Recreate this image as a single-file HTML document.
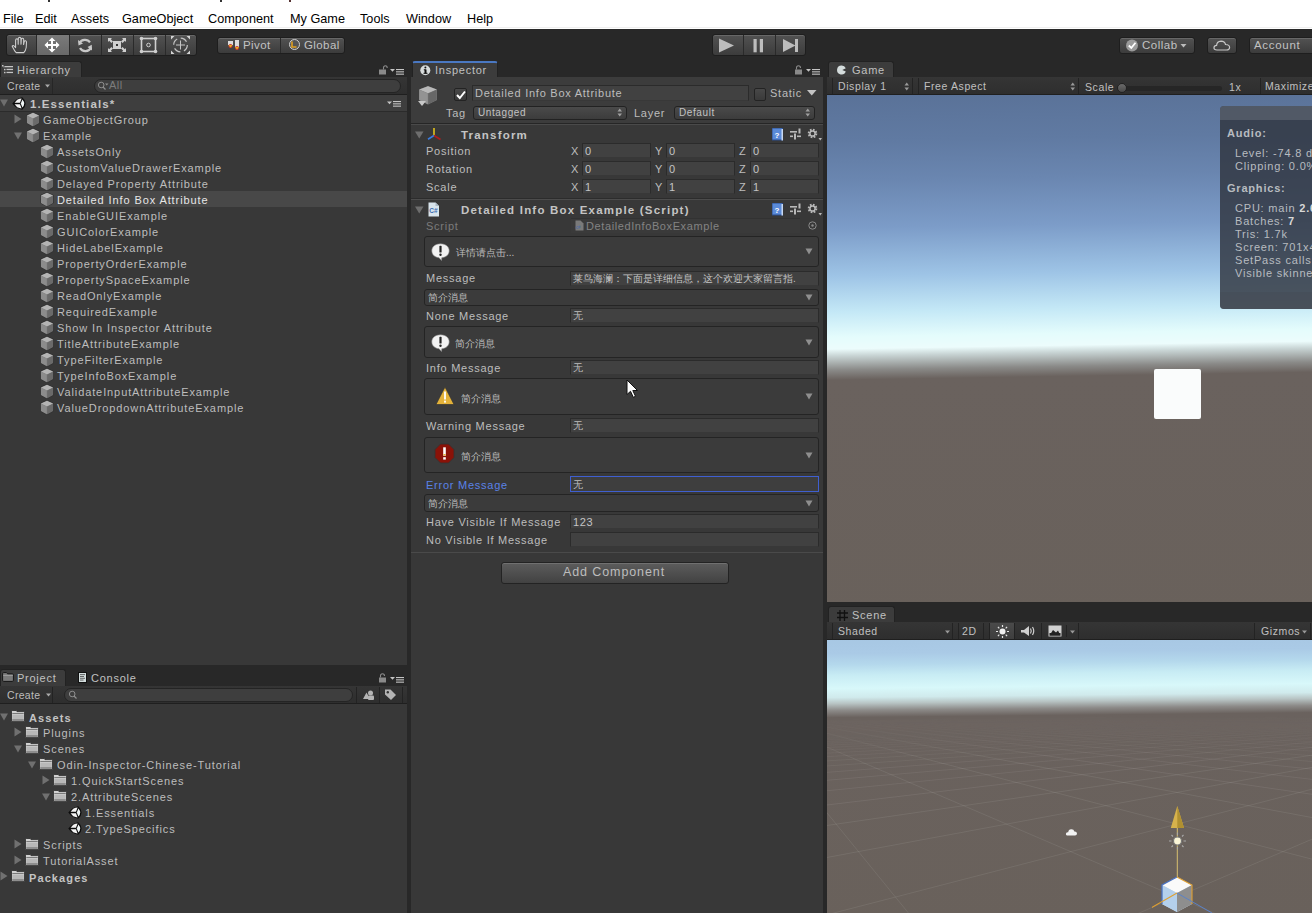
<!DOCTYPE html>
<html><head><meta charset="utf-8">
<style>
*{box-sizing:border-box;margin:0;padding:0}
body{-webkit-font-smoothing:antialiased}
html,body{width:1312px;height:913px;overflow:hidden;background:#282828;font-family:"Liberation Sans",sans-serif;font-size:11px;color:#b4b4b4}
.a{position:absolute}
.t{position:absolute;white-space:nowrap;line-height:13px}
#menu{left:0;top:0;width:1312px;height:29px;background:#fff}
#menu .t{color:#000;font-size:12.7px;top:13px}
.btn{position:absolute;border:1px solid #1e1e1e;border-radius:3px;background:linear-gradient(#525252,#3c3c3c);box-shadow:inset 0 1px 0 rgba(255,255,255,0.13)}
.tab{position:absolute;background:#3c3c3c;border-radius:3px 3px 0 0;border:1px solid #222;border-bottom:none}
.tbar{position:absolute;background:linear-gradient(#353535,#2e2e2e);border-bottom:1px solid #1f1f1f}
.panel{position:absolute;background:#383838}
.tl{font-size:11px;letter-spacing:0.75px;color:#c0c0c0}
.hr{font-size:11px;letter-spacing:0.9px;color:#bdbdbd}
.hb{font-size:11px;letter-spacing:1.1px;font-weight:bold;color:#c4c4c4;margin-top:1px}
.il{font-size:11px;letter-spacing:0.75px;color:#bdbdbd;margin-top:1px}
.ib{font-size:11.5px;letter-spacing:1.2px;font-weight:bold;color:#c4c4c4;margin-top:1px}
.fv{font-size:11px;letter-spacing:0.6px;color:#c4c4c4;margin-top:1px}
.cj{font-size:10px;color:#bdbdbd;margin-top:1px}
.fld{background:#414141;border:1px solid #2b2b2b;border-bottom-color:#383838}
.cb{background:linear-gradient(#484848,#3a3a3a);border:1px solid #232323;border-radius:2px}
.dd{background:linear-gradient(#4a4a4a,#3c3c3c);border:1px solid #222;border-radius:3px}
.box{background:#3b3b3b;border:1px solid #242424;border-radius:3px}
.sep{position:absolute;width:1px;height:16px;background:#232323}
.tt{font-size:10.5px;letter-spacing:0.6px;color:#c0c0c0}
.st{white-space:nowrap;font-size:11px;letter-spacing:0.8px;color:#b8bcc0;line-height:13px;margin-top:-1px}
.st b{color:#d8d8d8}
</style></head><body>
<svg width="0" height="0" style="position:absolute"><defs>
<symbol id="cube" viewBox="0 0 13 14"><path d="M6.5 0.5 L12.5 3.2 L12.5 10.3 L6.5 13.5 L0.5 10.3 L0.5 3.2 Z" fill="#7a7a7a" stroke="#2a2a2a" stroke-width="0.8"/><path d="M6.5 0.8 L12.2 3.3 L6.5 6 L0.8 3.3Z" fill="#b4b4b4"/><path d="M0.8 3.5 L6.3 6.1 L6.3 13.2 L0.8 10.2Z" fill="#8c8c8c"/><path d="M6.7 6.1 L12.2 3.5 L12.2 10.2 L6.7 13.2Z" fill="#6a6a6a"/></symbol>
<symbol id="unity" viewBox="0 0 14 13"><path d="M0.3 6.5 Q3.5 1.8 10.2 0.2 Q13.6 3.2 13.6 6.5 Q13.6 9.8 10.2 12.8 Q3.5 11.2 0.3 6.5Z" fill="#0c0c0c"/><path d="M2.6 5.7 L5.2 2.7 Q7.6 1.7 9.6 1.6 L8 5.7Z" fill="#f4f4f4"/><path d="M2.6 7.3 L5.2 10.3 Q7.6 11.3 9.6 11.4 L8 7.3Z" fill="#f4f4f4"/><path d="M8.8 6.5 L10.4 2.4 Q12.2 4.4 12.2 6.5 Q12.2 8.6 10.4 10.6Z" fill="#f0f6f6"/></symbol>
<symbol id="folder" viewBox="0 0 14 12"><path d="M0.5 1.2 Q0.5 0.5 1.2 0.5 H5 L6 1.6 H12.8 Q13.5 1.6 13.5 2.3 V11 Q13.5 11.5 13 11.5 H1 Q0.5 11.5 0.5 11Z" fill="#d0d0d0" stroke="#2a2a2a" stroke-width="0.8"/><rect x="1.3" y="3" width="11.4" height="1" fill="#7a7a7a"/><rect x="1.3" y="4.6" width="11.4" height="6.5" fill="#b8b8b8"/><rect x="1.3" y="9" width="11.4" height="2" fill="#8e8e8e"/></symbol>
<symbol id="hdricons" viewBox="0 0 52 15"><rect x="1" y="1" width="11" height="12.5" fill="#2a4d8c"/><rect x="1.5" y="1.5" width="9.5" height="11" fill="#5a8ad8"/><rect x="10.5" y="2" width="1.5" height="11.5" fill="#c8d8f0"/><text x="3.5" y="10.5" font-family="Liberation Sans" font-size="8" font-weight="bold" fill="#fff">?</text><g fill="#b8b8b8"><rect x="19" y="4" width="7" height="1.6"/><rect x="27.5" y="1.5" width="2" height="5"/><rect x="19" y="8.5" width="3" height="1.6"/><rect x="23" y="6.5" width="2" height="6"/><rect x="26" y="8.5" width="4" height="1.6"/></g><circle cx="41.5" cy="6.5" r="3.7" fill="none" stroke="#b8b8b8" stroke-width="2.2" stroke-dasharray="1.6 1.3"/><circle cx="41.5" cy="6.5" r="2.6" fill="none" stroke="#b8b8b8" stroke-width="1.5"/><path d="M47.5 11 h3.5 l-1.75 2.5z" fill="#b8b8b8"/></symbol>
<symbol id="bubble" viewBox="0 0 19 18"><path d="M9.5 0.8 C14.8 0.8 18.2 3.8 18.2 7.8 C18.2 11.6 15 14.5 10.8 14.7 L10.5 17.5 L8 14.7 C3.8 14.4 0.8 11.6 0.8 7.8 C0.8 3.8 4.2 0.8 9.5 0.8Z" fill="#f2f2f2" stroke="#888" stroke-width="0.6"/><rect x="8.4" y="2.8" width="2.2" height="6.8" rx="0.6" fill="#222"/><circle cx="9.5" cy="11.8" r="1.2" fill="#222"/></symbol>
<symbol id="warn" viewBox="0 0 20 20"><path d="M10 1 L19 18.5 H1Z" fill="#e4b23a" stroke="#333" stroke-width="0.7" stroke-linejoin="round"/><rect x="9.1" y="5.5" width="1.8" height="8" fill="#fff"/><rect x="9.1" y="14.6" width="1.8" height="2" fill="#fff"/></symbol>
<symbol id="err" viewBox="0 0 21 21"><path d="M6.5 1 H14.5 L20 6.5 V14.5 L14.5 20 H6.5 L1 14.5 V6.5Z" fill="#8a1208" stroke="#333" stroke-width="0.8"/><rect x="9.2" y="4.3" width="2.6" height="8.5" fill="#fff"/><rect x="9.2" y="14.2" width="2.6" height="2.4" fill="#fff"/><rect x="9.4" y="11" width="2.2" height="1.5" fill="#e8b030"/></symbol>
</defs></svg>
<div id="menu" class="a">
 <div class="a" style="left:0;top:27px;width:1312px;height:1px;background:#efefef"></div>
 <div class="a" style="left:48px;top:0;width:2px;height:2px;background:#333"></div><div class="a" style="left:220px;top:0;width:2px;height:2px;background:#333"></div><div class="a" style="left:289px;top:0;width:2px;height:2px;background:#533"></div>
 <span class="t" style="left:3px">File</span>
 <span class="t" style="left:35px">Edit</span>
 <span class="t" style="left:71px">Assets</span>
 <span class="t" style="left:122px">GameObject</span>
 <span class="t" style="left:208px">Component</span>
 <span class="t" style="left:290px">My Game</span>
 <span class="t" style="left:360px">Tools</span>
 <span class="t" style="left:406px">Window</span>
 <span class="t" style="left:467px">Help</span>
</div>

<!-- main toolbar -->
<div class="btn" style="left:6px;top:34px;width:191px;height:22px;overflow:hidden">
 <div class="a" style="left:30px;top:0;width:32px;height:21px;background:linear-gradient(#7a7a7a,#686868)"></div>
 <div class="a" style="left:29px;top:0;width:1px;height:21px;background:#2a2a2a"></div>
 <div class="a" style="left:62px;top:0;width:1px;height:21px;background:#2a2a2a"></div>
 <div class="a" style="left:94px;top:0;width:1px;height:21px;background:#2a2a2a"></div>
 <div class="a" style="left:126px;top:0;width:1px;height:21px;background:#2a2a2a"></div>
 <div class="a" style="left:158px;top:0;width:1px;height:21px;background:#2a2a2a"></div>
</div>
<svg class="a" style="left:0;top:30px" width="200" height="30" viewBox="0 0 200 30">
 <!-- hand -->
 <path d="M16.2 22.6 Q14.8 21.2 13.8 19.2 L12.3 16.6 Q12 15.4 13.2 15.5 Q14.2 15.8 15.6 17.6 L15.6 10.2 Q15.7 8.7 16.9 8.7 Q18 8.8 18.1 10.2 L18.2 14.2 L18.3 8.6 Q18.5 7.3 19.6 7.3 Q20.8 7.4 20.9 8.7 L21 14.2 L21.3 9.3 Q21.5 8.2 22.6 8.3 Q23.7 8.5 23.7 9.6 L23.6 14.6 L24.2 11.6 Q24.5 10.6 25.5 10.8 Q26.6 11.1 26.5 12.2 L26.2 17.5 Q25.6 21 23.8 22.6 Z" fill="none" stroke="#d0d0d0" stroke-width="1.05" stroke-linejoin="round"/>
 <!-- move -->
 <g fill="#fff"><path d="M52 7.5 L55.5 11 L53 11 L53 14 L56 14 L56 11.5 L59.5 15 L56 18.5 L56 16 L53 16 L53 19 L55.5 19 L52 22.5 L48.5 19 L51 19 L51 16 L48 16 L48 18.5 L44.5 15 L48 11.5 L48 14 L51 14 L51 11 L48.5 11 Z"/></g>
 <!-- rotate -->
 <path d="M79.5 13 A6 5.5 0 0 1 90 12.3" fill="none" stroke="#c8c8c8" stroke-width="2.2"/>
 <path d="M78 10 L78.5 15.5 L83 13.5 Z" fill="#c8c8c8"/>
 <path d="M91 17.5 A6 5.5 0 0 1 80 18" fill="none" stroke="#c8c8c8" stroke-width="2.2"/>
 <path d="M92 20.5 L91.8 14.8 L87.5 17 Z" fill="#c8c8c8"/>
 <!-- scale -->
 <g fill="#cfcfcf"><rect x="113" y="11" width="8" height="8"/><path d="M108 8 L112 8 L110.8 9.2 L113 11.4 L111.4 13 L109.2 10.8 L108 12 Z M126 8 L122 8 L123.2 9.2 L121 11.4 L122.6 13 L124.8 10.8 L126 12 Z M108 22 L112 22 L110.8 20.8 L113 18.6 L111.4 17 L109.2 19.2 L108 18 Z M126 22 L122 22 L123.2 20.8 L121 18.6 L122.6 17 L124.8 19.2 L126 18 Z"/></g>
 <rect x="116" y="14" width="2" height="2" fill="#333"/>
 <!-- rect -->
 <rect x="141.5" y="8.5" width="14" height="13" fill="none" stroke="#cfcfcf" stroke-width="1.6"/>
 <g fill="#cfcfcf"><circle cx="141.5" cy="8.5" r="1.8"/><circle cx="155.5" cy="8.5" r="1.8"/><circle cx="141.5" cy="21.5" r="1.8"/><circle cx="155.5" cy="21.5" r="1.8"/></g>
 <circle cx="148.5" cy="15" r="1.8" fill="none" stroke="#cfcfcf" stroke-width="1"/>
 <!-- transform -->
 <circle cx="180.5" cy="15" r="6.8" fill="none" stroke="#c4c4c4" stroke-width="1.2" stroke-dasharray="7 3.7"/>
 <g fill="#d4d4d4"><path d="M171 6 L174.5 6 L171 9.5Z M190 6 L186.5 6 L190 9.5Z M171 24 L174.5 24 L171 20.5Z M190 24 L186.5 24 L190 20.5Z"/></g>
 <path d="M180.5 10.5 V19.5 M176 15 H185" stroke="#c4c4c4" stroke-width="1"/>
</svg>

<div class="btn" style="left:217px;top:37px;width:128px;height:17px">
 <div class="a" style="left:62px;top:0;width:1px;height:15px;background:#2a2a2a"></div>
</div>
<svg class="a" style="left:225px;top:39px" width="80" height="14">
 <rect x="3" y="2" width="5" height="4" fill="#ddd"/><rect x="10" y="1" width="4" height="7" fill="#ddd"/>
 <circle cx="5.5" cy="7" r="2" fill="#c33"/><circle cx="12" cy="9" r="2" fill="#c33"/>
 <path d="M3.5 6 h4 l-2 2.5z M10 8 h4 l-2 2.5z" fill="#e8b020"/>
 <circle cx="69.5" cy="5.5" r="5" fill="#555" stroke="#cfcfcf" stroke-width="1"/>
 <path d="M67 2.5 V8 H71.5" fill="none" stroke="#e0a020" stroke-width="1.6"/>
</svg>
<span class="t" style="left:243px;top:39px;color:#c2c2c2;font-size:11.5px;letter-spacing:0.4px">Pivot</span>
<span class="t" style="left:304px;top:39px;color:#c2c2c2;font-size:11.5px;letter-spacing:0.4px">Global</span>

<div class="btn" style="left:712px;top:34px;width:94px;height:22px">
 <div class="a" style="left:30px;top:0;width:1px;height:20px;background:#2a2a2a"></div>
 <div class="a" style="left:62px;top:0;width:1px;height:20px;background:#2a2a2a"></div>
</div>
<svg class="a" style="left:712px;top:34px" width="94" height="22">
 <path d="M7 4.5 L22 11.5 L7 18.5 Z" fill="#bdbdbd"/>
 <rect x="41.5" y="5" width="3.2" height="13.3" fill="#bdbdbd"/><rect x="47.8" y="5" width="3.2" height="13.3" fill="#bdbdbd"/>
 <path d="M71 5 L83.5 11.5 L71 18 Z" fill="#bdbdbd"/><rect x="83" y="5" width="3" height="13" fill="#bdbdbd"/>
</svg>

<div class="btn" style="left:1119px;top:37px;width:76px;height:17px"></div>
<svg class="a" style="left:1125px;top:39px" width="14" height="14"><circle cx="7" cy="6.5" r="6" fill="#9a9a9a"/><path d="M3.8 6.5 L6.3 9 L10.5 3.8" fill="none" stroke="#fff" stroke-width="1.8"/></svg>
<span class="t" style="left:1142px;top:39px;color:#c2c2c2;font-size:11.5px;letter-spacing:0.5px">Collab</span>
<svg class="a" style="left:1180px;top:43px" width="8" height="6"><path d="M0.5 1 h6 l-3 3.5z" fill="#bbb"/></svg>
<div class="btn" style="left:1207px;top:37px;width:30px;height:17px"></div>
<svg class="a" style="left:1213px;top:39px" width="18" height="13"><path d="M4 11 Q0.8 11 1 8.5 Q1.2 6.3 3.6 6.3 Q4 2.5 8 2.2 Q11.8 2.3 12.5 5.5 Q16.5 5.5 16.6 8.5 Q16.5 11 13.5 11 Z" fill="none" stroke="#c8c8c8" stroke-width="1.2"/></svg>
<div class="btn" style="left:1249px;top:37px;width:70px;height:17px"></div>
<span class="t" style="left:1254px;top:39px;color:#c2c2c2;font-size:11.5px;letter-spacing:0.7px">Account</span>

<!-- Hierarchy -->
<div class="tab" style="left:0;top:61px;width:82px;height:17px"></div>
<svg class="a" style="left:2px;top:65px" width="12" height="9"><g fill="#c4c4c4"><rect x="0" y="0" width="1.5" height="1.5"/><rect x="1" y="1" width="1.5" height="1.5" fill="#777"/><rect x="2.5" y="1" width="8.5" height="1.3"/><rect x="2" y="3.8" width="1.5" height="1.5"/><rect x="4.5" y="3.8" width="6.5" height="1.3"/><rect x="2" y="6.8" width="1.5" height="1.5"/><rect x="4.5" y="6.8" width="6.5" height="1.3"/></g></svg>
<span class="t tl" style="left:17px;top:64px">Hierarchy</span>
<svg class="a" style="left:378px;top:65px" width="28" height="11"><path d="M5.5 4.5 V3 Q5.5 0.8 7.5 0.8 Q9.2 0.8 9.2 3" fill="none" stroke="#8a8a8a" stroke-width="1.1"/><rect x="1" y="4.5" width="7" height="5" fill="#8a8a8a"/><path d="M12 4 h5 l-2.5 2.8z" fill="#c4c4c4"/><rect x="18" y="4" width="8" height="1.1" fill="#c4c4c4"/><rect x="18" y="6.3" width="8" height="1.1" fill="#c4c4c4"/><rect x="18" y="8.6" width="8" height="1.1" fill="#c4c4c4"/></svg>
<div class="tbar" style="left:0;top:77px;width:407px;height:18px"></div>
<div class="a" style="left:52px;top:78px;width:1px;height:16px;background:#262626"></div>
<span class="t" style="left:7px;top:80px;font-size:10.5px;letter-spacing:0.3px;color:#bdbdbd">Create</span>
<svg class="a" style="left:45px;top:84px" width="6" height="4"><path d="M0 0.5 h5 l-2.5 3z" fill="#aaa"/></svg>
<div class="a" style="left:94px;top:79px;width:307px;height:14px;border-radius:7px;background:#3e3e3e;border:1px solid #242424"></div>
<svg class="a" style="left:97px;top:81px" width="12" height="10"><circle cx="4.2" cy="4" r="2.8" fill="none" stroke="#8f8f8f" stroke-width="1"/><path d="M6 6 L8.5 8.5" stroke="#8f8f8f" stroke-width="1.2"/><path d="M8 2.5 h3.5 l-1.75 2z" fill="#8f8f8f"/></svg>
<span class="t" style="left:109px;top:79px;font-size:11px;color:#7c7c7c;letter-spacing:0.5px">All</span>
<div class="panel" style="left:0;top:95px;width:407px;height:570px"></div>
<div class="a" style="left:0;top:95px;width:407px;height:17px;background:#3e3e3e;border-bottom:1px solid #2b2b2b"></div>
<svg class="a" style="left:0;top:99px" width="9" height="8"><path d="M0 0.5 h8 l-4 7z" fill="#6e6e6e"/></svg>
<svg class="a" style="left:12px;top:97px" width="14" height="13"><use href="#unity"/></svg>
<span class="t hb" style="left:30px;top:97px;font-size:11.5px;letter-spacing:1.1px">1.Essentials*</span>
<svg class="a" style="left:387px;top:100px" width="16" height="8"><path d="M0 1.5 h5 l-2.5 2.8z" fill="#c4c4c4"/><rect x="6" y="1" width="8" height="1.1" fill="#c4c4c4"/><rect x="6" y="3.3" width="8" height="1.1" fill="#c4c4c4"/><rect x="6" y="5.6" width="8" height="1.1" fill="#c4c4c4"/></svg>
<div class="a" style="left:0;top:191px;width:407px;height:16px;background:#484848"></div>
<svg class="a" style="left:14px;top:114px" width="9" height="10"><path d="M0.5 0.5 v9 l7 -4.5z" fill="#707070"/></svg>
<svg class="a" style="left:14px;top:132px" width="9" height="9"><path d="M0 0.5 h8 l-4 7z" fill="#707070"/></svg>
<svg class="a" style="left:26px;top:112px" width="14" height="15"><use href="#cube"/></svg>
<span class="t hr" style="left:43px;top:114px">GameObjectGroup</span>
<svg class="a" style="left:26px;top:128px" width="14" height="15"><use href="#cube"/></svg>
<span class="t hr" style="left:43px;top:130px">Example</span>
<svg class="a" style="left:40px;top:144px" width="14" height="15"><use href="#cube"/></svg><span class="t hr" style="left:57px;top:146px">AssetsOnly</span>
<svg class="a" style="left:40px;top:160px" width="14" height="15"><use href="#cube"/></svg><span class="t hr" style="left:57px;top:162px">CustomValueDrawerExample</span>
<svg class="a" style="left:40px;top:176px" width="14" height="15"><use href="#cube"/></svg><span class="t hr" style="left:57px;top:178px">Delayed Property Attribute</span>
<svg class="a" style="left:40px;top:192px" width="14" height="15"><use href="#cube"/></svg><span class="t hr" style="left:57px;top:194px;color:#e6e6e6">Detailed Info Box Attribute</span>
<svg class="a" style="left:40px;top:208px" width="14" height="15"><use href="#cube"/></svg><span class="t hr" style="left:57px;top:210px">EnableGUIExample</span>
<svg class="a" style="left:40px;top:224px" width="14" height="15"><use href="#cube"/></svg><span class="t hr" style="left:57px;top:226px">GUIColorExample</span>
<svg class="a" style="left:40px;top:240px" width="14" height="15"><use href="#cube"/></svg><span class="t hr" style="left:57px;top:242px">HideLabelExample</span>
<svg class="a" style="left:40px;top:256px" width="14" height="15"><use href="#cube"/></svg><span class="t hr" style="left:57px;top:258px">PropertyOrderExample</span>
<svg class="a" style="left:40px;top:272px" width="14" height="15"><use href="#cube"/></svg><span class="t hr" style="left:57px;top:274px">PropertySpaceExample</span>
<svg class="a" style="left:40px;top:288px" width="14" height="15"><use href="#cube"/></svg><span class="t hr" style="left:57px;top:290px">ReadOnlyExample</span>
<svg class="a" style="left:40px;top:304px" width="14" height="15"><use href="#cube"/></svg><span class="t hr" style="left:57px;top:306px">RequiredExample</span>
<svg class="a" style="left:40px;top:320px" width="14" height="15"><use href="#cube"/></svg><span class="t hr" style="left:57px;top:322px">Show In Inspector Attribute</span>
<svg class="a" style="left:40px;top:336px" width="14" height="15"><use href="#cube"/></svg><span class="t hr" style="left:57px;top:338px">TitleAttributeExample</span>
<svg class="a" style="left:40px;top:352px" width="14" height="15"><use href="#cube"/></svg><span class="t hr" style="left:57px;top:354px">TypeFilterExample</span>
<svg class="a" style="left:40px;top:368px" width="14" height="15"><use href="#cube"/></svg><span class="t hr" style="left:57px;top:370px">TypeInfoBoxExample</span>
<svg class="a" style="left:40px;top:384px" width="14" height="15"><use href="#cube"/></svg><span class="t hr" style="left:57px;top:386px">ValidateInputAttributeExample</span>
<svg class="a" style="left:40px;top:400px" width="14" height="15"><use href="#cube"/></svg><span class="t hr" style="left:57px;top:402px">ValueDropdownAttributeExample</span>
<!-- Inspector -->
<div class="tab" style="left:412px;top:61px;width:86px;height:17px;border-top:2px solid #4a78c2"></div>
<svg class="a" style="left:420px;top:65px" width="11" height="11"><circle cx="5.3" cy="5.3" r="5" fill="#d8dcdc"/><rect x="4.5" y="4.5" width="2" height="4" fill="#111"/><rect x="3.5" y="7.8" width="4" height="1" fill="#111"/><rect x="3.8" y="4.3" width="2" height="1" fill="#111"/><circle cx="5.4" cy="2.6" r="1" fill="#111"/></svg>
<span class="t tl" style="left:435px;top:64px">Inspector</span>
<svg class="a" style="left:793px;top:65px" width="28" height="11"><path d="M3.5 4.5 V3 Q3.5 0.8 5.5 0.8 Q7.5 0.8 7.5 3" fill="none" stroke="#8a8a8a" stroke-width="1.1"/><rect x="2" y="4.5" width="7" height="5" fill="#8a8a8a"/><path d="M13 4 h5 l-2.5 2.8z" fill="#c4c4c4"/><rect x="19" y="4" width="8" height="1.1" fill="#c4c4c4"/><rect x="19" y="6.3" width="8" height="1.1" fill="#c4c4c4"/><rect x="19" y="8.6" width="8" height="1.1" fill="#c4c4c4"/></svg>
<div class="panel" style="left:411px;top:77px;width:412px;height:836px"></div>
<div class="a" style="left:411px;top:77px;width:412px;height:47px;background:#3c3c3c;border-bottom:1px solid #262626"></div>
<div class="a" style="left:411px;top:124px;width:412px;height:1px;background:#4a4a4a"></div>
<svg class="a" style="left:417px;top:85px" width="23" height="24"><path d="M11 1 L20 4.5 L20 15 L11 19.5 L2 15 L2 4.5Z" fill="#7c7c7c"/><path d="M11 1.2 L19.7 4.6 L11 8.3 L2.3 4.6Z" fill="#b9b9b9"/><path d="M2.3 4.8 L10.8 8.4 L10.8 19.2 L2.3 14.9Z" fill="#939393"/><path d="M11.2 8.4 L19.7 4.8 L19.7 14.9 L11.2 19.2Z" fill="#676767"/><path d="M1 16 h8 l-4 5z" fill="#c8c8c8"/></svg>
<div class="a cb" style="left:454px;top:88px;width:13px;height:13px"></div>
<svg class="a" style="left:455px;top:89px" width="12" height="12"><path d="M2 6 L4.8 9 L10 2.5" fill="none" stroke="#fff" stroke-width="2"/></svg>
<div class="a fld" style="left:472px;top:85px;width:277px;height:16px"></div>
<span class="t il" style="left:475px;top:86px">Detailed Info Box Attribute</span>
<div class="a cb" style="left:754px;top:88px;width:12px;height:13px"></div>
<span class="t il" style="left:770px;top:86px">Static</span>
<svg class="a" style="left:807px;top:90px" width="10" height="6"><path d="M0 0 h9.5 l-4.75 5.5z" fill="#c4c4c4"/></svg>
<span class="t il" style="left:446px;top:106px">Tag</span>
<div class="a dd" style="left:473px;top:106px;width:154px;height:14px"></div>
<span class="t" style="left:478px;top:106px;font-size:10px;letter-spacing:0.6px;color:#c2c2c2">Untagged</span>
<svg class="a" style="left:617px;top:108px" width="6" height="9"><path d="M0.5 3.5 L2.75 0.5 L5 3.5Z M0.5 5.5 L2.75 8.5 L5 5.5Z" fill="#a0a0a0"/></svg>
<span class="t il" style="left:634px;top:106px">Layer</span>
<div class="a dd" style="left:674px;top:106px;width:141px;height:14px"></div>
<span class="t" style="left:679px;top:106px;font-size:10px;letter-spacing:0.6px;color:#c2c2c2">Default</span>
<svg class="a" style="left:805px;top:108px" width="6" height="9"><path d="M0.5 3.5 L2.75 0.5 L5 3.5Z M0.5 5.5 L2.75 8.5 L5 5.5Z" fill="#a0a0a0"/></svg>

<!-- Transform -->
<svg class="a" style="left:415px;top:131px" width="9" height="8"><path d="M0 0.5 h8.5 l-4.25 7z" fill="#6e6e6e"/></svg>
<svg class="a" style="left:426px;top:127px" width="16" height="14"><path d="M8 1 V8.5" stroke="#e2c21c" stroke-width="1.6"/><path d="M8 8.5 L2 12.3" stroke="#3a7ce0" stroke-width="1.6"/><path d="M8 8.5 L14.5 12.5" stroke="#b01c1c" stroke-width="1.7"/></svg>
<span class="t ib" style="left:461px;top:128px">Transform</span>
<svg class="a" style="left:771px;top:127px" width="52" height="15"><use href="#hdricons"/></svg>
<span class="t il" style="left:426px;top:144px">Position</span>
<span class="t il" style="left:571px;top:144px">X</span><div class="a fld" style="left:582px;top:143px;width:69px;height:15px"></div><span class="t fv" style="left:585px;top:144px">0</span>
<span class="t il" style="left:655px;top:144px">Y</span><div class="a fld" style="left:666px;top:143px;width:69px;height:15px"></div><span class="t fv" style="left:669px;top:144px">0</span>
<span class="t il" style="left:739px;top:144px">Z</span><div class="a fld" style="left:750px;top:143px;width:69px;height:15px"></div><span class="t fv" style="left:753px;top:144px">0</span>
<span class="t il" style="left:426px;top:162px">Rotation</span>
<span class="t il" style="left:571px;top:162px">X</span><div class="a fld" style="left:582px;top:161px;width:69px;height:15px"></div><span class="t fv" style="left:585px;top:162px">0</span>
<span class="t il" style="left:655px;top:162px">Y</span><div class="a fld" style="left:666px;top:161px;width:69px;height:15px"></div><span class="t fv" style="left:669px;top:162px">0</span>
<span class="t il" style="left:739px;top:162px">Z</span><div class="a fld" style="left:750px;top:161px;width:69px;height:15px"></div><span class="t fv" style="left:753px;top:162px">0</span>
<span class="t il" style="left:426px;top:180px">Scale</span>
<span class="t il" style="left:571px;top:180px">X</span><div class="a fld" style="left:582px;top:179px;width:69px;height:15px"></div><span class="t fv" style="left:585px;top:180px">1</span>
<span class="t il" style="left:655px;top:180px">Y</span><div class="a fld" style="left:666px;top:179px;width:69px;height:15px"></div><span class="t fv" style="left:669px;top:180px">1</span>
<span class="t il" style="left:739px;top:180px">Z</span><div class="a fld" style="left:750px;top:179px;width:69px;height:15px"></div><span class="t fv" style="left:753px;top:180px">1</span>
<div class="a" style="left:411px;top:199px;width:412px;height:1px;background:#4c4c4c"></div>
<div class="a" style="left:411px;top:198px;width:412px;height:1px;background:#2c2c2c"></div>
<svg class="a" style="left:415px;top:206px" width="9" height="8"><path d="M0 0.5 h8.5 l-4.25 7z" fill="#6e6e6e"/></svg>
<svg class="a" style="left:428px;top:202px" width="12" height="15"><path d="M0.5 0.5 H7.5 L11 4 V14.5 H0.5Z" fill="#d8e4ec"/><path d="M7.5 0.5 V4 H11" fill="#aab8c4"/><text x="1.2" y="11.3" font-family="Liberation Sans" font-size="6.5" font-weight="bold" fill="#3a6ab0">C#</text></svg>
<span class="t ib" style="left:461px;top:203px">Detailed Info Box Example (Script)</span>
<svg class="a" style="left:771px;top:202px" width="52" height="15"><use href="#hdricons"/></svg>
<span class="t il" style="left:426px;top:219px;color:#7b7b7b">Script</span>
<div class="a" style="left:571px;top:218px;width:229px;height:15px;background:#3a3a3a;border-top:1px solid #323232"></div>
<svg class="a" style="left:575px;top:220px" width="9" height="11"><path d="M0.5 0.5 H5.5 L8.5 3.5 V10.5 H0.5Z" fill="#7a7a7a"/><text x="0.8" y="8.5" font-family="Liberation Sans" font-size="4.5" fill="#4a6aa0">c#</text></svg>
<span class="t fv" style="left:586px;top:219px;color:#838383">DetailedInfoBoxExample</span>
<svg class="a" style="left:808px;top:221px" width="9" height="9"><circle cx="4.5" cy="4.5" r="3.7" fill="none" stroke="#8a8a8a" stroke-width="1"/><circle cx="4.5" cy="4.5" r="1.2" fill="#8a8a8a"/></svg>
<div class="a box" style="left:424px;top:236px;width:395px;height:31px"></div>
<svg class="a" style="left:431px;top:243px" width="19" height="18"><use href="#bubble"/></svg>
<span class="t cj" style="left:456px;top:245px">详情请点击...</span>
<svg class="a" style="left:805px;top:248px" width="8" height="7"><path d="M0.5 0.5 h7 l-3.5 6z" fill="#8f8f8f"/></svg>
<span class="t il" style="left:426px;top:271px">Message</span><div class="a fld" style="left:570px;top:271px;width:249px;height:15px"></div>
<span class="t cj" style="left:573px;top:271px;color:#c4c4c4">莱鸟海澜：下面是详细信息，这个欢迎大家留言指.</span>
<div class="a box" style="left:424px;top:289px;width:395px;height:17px"></div>
<span class="t cj" style="left:428px;top:290px">简介消息</span>
<svg class="a" style="left:805px;top:294px" width="8" height="7"><path d="M0.5 0.5 h7 l-3.5 6z" fill="#8f8f8f"/></svg>
<span class="t il" style="left:426px;top:309px">None Message</span><div class="a fld" style="left:570px;top:308px;width:249px;height:15px"></div>
<span class="t cj" style="left:573px;top:308px">无</span>
<div class="a box" style="left:424px;top:326px;width:395px;height:32px"></div>
<svg class="a" style="left:431px;top:334px" width="19" height="18"><use href="#bubble"/></svg>
<span class="t cj" style="left:455px;top:336px">简介消息</span>
<svg class="a" style="left:805px;top:339px" width="8" height="7"><path d="M0.5 0.5 h7 l-3.5 6z" fill="#8f8f8f"/></svg>
<span class="t il" style="left:426px;top:361px">Info Message</span><div class="a fld" style="left:570px;top:360px;width:249px;height:15px"></div>
<span class="t cj" style="left:573px;top:360px">无</span>
<div class="a box" style="left:424px;top:378px;width:395px;height:37px"></div>
<svg class="a" style="left:435px;top:386px" width="20" height="20"><use href="#warn"/></svg>
<span class="t cj" style="left:461px;top:391px">简介消息</span>
<svg class="a" style="left:805px;top:393px" width="8" height="7"><path d="M0.5 0.5 h7 l-3.5 6z" fill="#8f8f8f"/></svg>
<span class="t il" style="left:426px;top:419px">Warning Message</span><div class="a fld" style="left:570px;top:418px;width:249px;height:15px"></div>
<span class="t cj" style="left:573px;top:418px">无</span>
<div class="a box" style="left:424px;top:437px;width:395px;height:36px"></div>
<svg class="a" style="left:434px;top:443px" width="21" height="21"><use href="#err"/></svg>
<span class="t cj" style="left:461px;top:449px">简介消息</span>
<svg class="a" style="left:805px;top:452px" width="8" height="7"><path d="M0.5 0.5 h7 l-3.5 6z" fill="#8f8f8f"/></svg>
<span class="t il" style="left:426px;top:478px;color:#5a82e6">Error Message</span><div class="a" style="left:570px;top:476px;width:249px;height:16px;background:#3e3e3e;border:1px solid #3f5fd0"></div><span class="t cj" style="left:573px;top:477px">无</span>
<div class="a box" style="left:424px;top:494px;width:395px;height:18px"></div>
<span class="t cj" style="left:428px;top:496px">简介消息</span>
<svg class="a" style="left:805px;top:500px" width="8" height="7"><path d="M0.5 0.5 h7 l-3.5 6z" fill="#8f8f8f"/></svg>
<span class="t il" style="left:426px;top:515px">Have Visible If Message</span><div class="a fld" style="left:570px;top:514px;width:249px;height:15px"></div><span class="t fv" style="left:573px;top:515px">123</span>
<span class="t il" style="left:426px;top:533px">No Visible If Message</span><div class="a fld" style="left:570px;top:532px;width:249px;height:15px"></div>
<div class="a" style="left:411px;top:552px;width:412px;height:1px;background:#4a4a4a"></div>
<div class="a btn" style="left:501px;top:562px;width:228px;height:22px;background:linear-gradient(#5c5c5c,#424242);border-color:#232323"></div>
<span class="t" style="left:563px;top:566px;font-size:12.5px;letter-spacing:0.9px;color:#bdbdbd">Add Component</span>
<svg class="a" style="left:626px;top:379px" width="13" height="20"><path d="M1 1 L1 15.5 L4.5 12.3 L7.3 18.3 L9.5 17.3 L6.8 11.5 L11.5 11.5Z" fill="#fff" stroke="#111" stroke-width="1"/></svg>
<!-- Game -->
<div class="tab" style="left:828px;top:61px;width:66px;height:17px"></div>
<svg class="a" style="left:837px;top:65px" width="10" height="10"><path d="M4.5 0.5 A4.5 4.5 0 1 0 8.8 6.5 L5.3 5 L8.8 3.2 A4.5 4.5 0 0 0 4.5 0.5Z" fill="#d4dcdc"/></svg>
<span class="t tl" style="left:852px;top:64px">Game</span>
<div class="tbar" style="left:827px;top:77px;width:485px;height:18px"></div>
<div class="a sep" style="left:832px;top:78px"></div>
<div class="a sep" style="left:912px;top:78px"></div>
<div class="a sep" style="left:918px;top:78px"></div>
<div class="a sep" style="left:1078px;top:78px"></div>
<div class="a sep" style="left:1260px;top:78px"></div>
<span class="t tt" style="left:838px;top:80px">Display 1</span>
<svg class="a" style="left:904px;top:82px" width="6" height="9"><path d="M0.5 3.5 L2.75 0.5 L5 3.5Z M0.5 5.5 L2.75 8.5 L5 5.5Z" fill="#9a9a9a"/></svg>
<span class="t tt" style="left:924px;top:80px">Free Aspect</span>
<svg class="a" style="left:1070px;top:82px" width="6" height="9"><path d="M0.5 3.5 L2.75 0.5 L5 3.5Z M0.5 5.5 L2.75 8.5 L5 5.5Z" fill="#9a9a9a"/></svg>
<span class="t tt" style="left:1085px;top:81px">Scale</span>
<div class="a" style="left:1122px;top:86px;width:100px;height:5px;border-radius:3px;background:#262626"></div>
<div class="a" style="left:1117px;top:83px;width:10px;height:10px;border-radius:50%;background:linear-gradient(#6a6a6a,#4a4a4a);border:1px solid #222"></div>
<span class="t tt" style="left:1229px;top:81px">1x</span>
<span class="t tt" style="left:1265px;top:80px">Maximize</span>
<div class="a" style="left:827px;top:95px;width:485px;height:507px;overflow:hidden">
 <div class="a" style="left:-50px;top:-20px;width:600px;height:560px;transform:rotate(-0.95deg);background:linear-gradient(#58709a 0px,#5a7298 16px,#607aa2 62px,#6a86b0 101px,#7c9cc8 149px,#9ec4e6 197px,#c4e8f6 233px,#e4fcfc 258px,#ecfcfc 270px,#c8d4d4 277px,#8a8a88 291px,#6a625e 301px,#69615b 560px)"></div>
 <div class="a" style="left:327px;top:274px;width:47px;height:50px;background:#fafcfc;border-radius:2px"></div>
 <div class="a" style="left:393px;top:11px;width:100px;height:203px;border-radius:4px;background:rgba(48,52,62,0.82);overflow:hidden">
  <div class="a" style="left:0;top:0;width:100px;height:14px;background:rgba(90,98,110,0.75)"></div>
  <div class="a" style="left:0;top:186px;width:100px;height:17px;background:rgba(70,76,86,0.6)"></div>
 </div>
 <div class="a st" style="left:400px;top:33px;font-weight:bold">Audio:</div>
 <div class="a st" style="left:408px;top:53px">Level: -74.8 dB</div>
 <div class="a st" style="left:408px;top:66px">Clipping: 0.0%</div>
 <div class="a st" style="left:400px;top:88px;font-weight:bold">Graphics:</div>
 <div class="a st" style="left:408px;top:108px">CPU: main <b>2.6</b></div>
 <div class="a st" style="left:408px;top:121px">Batches: <b>7</b></div>
 <div class="a st" style="left:408px;top:134px">Tris: 1.7k</div>
 <div class="a st" style="left:408px;top:147px">Screen: 701x489</div>
 <div class="a st" style="left:408px;top:160px">SetPass calls:</div>
 <div class="a st" style="left:408px;top:173px">Visible skinned</div>
</div>

<!-- Scene -->
<div class="tab" style="left:828px;top:606px;width:67px;height:17px"></div>
<svg class="a" style="left:837px;top:610px" width="11" height="11"><path d="M3 0 V11 M7.5 0 V11 M0 3 H11 M0 7.5 H11" stroke="#111" stroke-width="1.3"/></svg>
<span class="t tl" style="left:852px;top:609px">Scene</span>
<div class="tbar" style="left:827px;top:622px;width:485px;height:18px"></div>
<div class="a sep" style="left:832px;top:623px"></div>
<div class="a sep" style="left:952px;top:623px"></div>
<div class="a sep" style="left:958px;top:623px"></div>
<div class="a sep" style="left:983px;top:623px"></div>
<div class="a" style="left:989px;top:623px;width:26px;height:16px;background:linear-gradient(#4a4a4a,#3e3e3e);border-left:1px solid #222;border-right:1px solid #222"></div>
<div class="a sep" style="left:1041px;top:623px"></div>
<div class="a sep" style="left:1066px;top:625px;height:12px"></div>
<div class="a sep" style="left:1078px;top:623px"></div>
<div class="a sep" style="left:1254px;top:623px"></div>
<div class="a sep" style="left:1310px;top:623px"></div>
<span class="t tt" style="left:838px;top:625px">Shaded</span>
<svg class="a" style="left:945px;top:630px" width="6" height="4"><path d="M0 0.5 h5 l-2.5 3z" fill="#9a9a9a"/></svg>
<span class="t tt" style="left:962px;top:625px">2D</span>
<svg class="a" style="left:995px;top:624px" width="15" height="15"><circle cx="7.5" cy="7.5" r="3" fill="#f0f0f0"/><g stroke="#e8e8e8" stroke-width="1.2"><path d="M7.5 1 V3 M7.5 12 V14 M1 7.5 H3 M12 7.5 H14 M2.9 2.9 L4.3 4.3 M10.7 10.7 L12.1 12.1 M2.9 12.1 L4.3 10.7 M10.7 4.3 L12.1 2.9"/></g></svg>
<svg class="a" style="left:1020px;top:624px" width="16" height="14"><path d="M1 6 H4 L9 2 V12 L4 8.5 H1Z" fill="#cfcfcf"/><path d="M10.5 4.5 Q12 7 10.5 9.5 M12.5 3 Q15 7 12.5 11" fill="none" stroke="#cfcfcf" stroke-width="1.2"/></svg>
<svg class="a" style="left:1048px;top:625px" width="14" height="12"><rect x="0.5" y="0.5" width="13" height="11" fill="#d0d0d0"/><path d="M1.5 10.5 L5 5 L8 7.5 L10 5.5 L12.5 10.5Z" fill="#222"/><rect x="1.5" y="8" width="11" height="2.5" fill="#222"/></svg>
<svg class="a" style="left:1070px;top:630px" width="6" height="4"><path d="M0 0.5 h5 l-2.5 3z" fill="#9a9a9a"/></svg>
<span class="t tt" style="left:1261px;top:625px">Gizmos</span>
<svg class="a" style="left:1302px;top:630px" width="6" height="4"><path d="M0 0.5 h5 l-2.5 3z" fill="#9a9a9a"/></svg>
<div class="a" style="left:827px;top:640px;width:485px;height:273px;overflow:hidden">
 <div class="a" style="left:-50px;top:-12px;width:600px;height:300px;transform:rotate(-0.6deg);background:linear-gradient(#a6c6e2 0px,#a8c8e4 12px,#aacae6 23px,#b4d8ec 34px,#c8ecf4 45px,#d8f8fa 58px,#d0eaec 67px,#b8c4c4 73px,#8c8a88 80px,#6a625e 87px,#69615b 300px)"></div>
 <svg class="a" style="left:0;top:0" width="485" height="273" id="grid"><defs><linearGradient id="gfade" x1="0" y1="0" x2="0" y2="1"><stop offset="0" stop-color="#000"/><stop offset="0.28" stop-color="#000"/><stop offset="0.45" stop-color="#fff"/><stop offset="1" stop-color="#fff"/></linearGradient><mask id="gm"><rect width="485" height="273" fill="url(#gfade)"/></mask></defs><g mask="url(#gm)"><g stroke="#b8b2ae" stroke-width="0.9"><line x1="-599.9" y1="81.1" x2="-587.8" y2="80.9" stroke-opacity="0.04"/><line x1="-599.7" y1="81.3" x2="-566.7" y2="80.7" stroke-opacity="0.04"/><line x1="-600.0" y1="81.6" x2="-546.3" y2="80.6" stroke-opacity="0.04"/><line x1="-599.8" y1="81.9" x2="-526.4" y2="80.5" stroke-opacity="0.04"/><line x1="-599.6" y1="82.2" x2="-507.2" y2="80.4" stroke-opacity="0.04"/><line x1="-599.9" y1="82.5" x2="-488.5" y2="80.2" stroke-opacity="0.04"/><line x1="-599.7" y1="82.8" x2="-470.4" y2="80.1" stroke-opacity="0.04"/><line x1="-600.0" y1="83.2" x2="-452.8" y2="80.0" stroke-opacity="0.04"/><line x1="-599.7" y1="83.6" x2="-435.6" y2="79.9" stroke-opacity="0.05"/><line x1="-599.5" y1="84.0" x2="-418.9" y2="79.8" stroke-opacity="0.05"/><line x1="-599.8" y1="84.4" x2="-402.7" y2="79.7" stroke-opacity="0.05"/><line x1="-599.6" y1="84.9" x2="-386.9" y2="79.6" stroke-opacity="0.05"/><line x1="-600.0" y1="85.4" x2="-371.5" y2="79.5" stroke-opacity="0.05"/><line x1="1085.0" y1="79.8" x2="1072.5" y2="79.5" stroke-opacity="0.03"/><line x1="-599.7" y1="85.9" x2="-356.6" y2="79.4" stroke-opacity="0.05"/><line x1="1084.9" y1="80.1" x2="1057.5" y2="79.4" stroke-opacity="0.03"/><line x1="-599.4" y1="86.5" x2="-342.0" y2="79.3" stroke-opacity="0.05"/><line x1="1084.8" y1="80.5" x2="1042.9" y2="79.3" stroke-opacity="0.04"/><line x1="-599.8" y1="87.2" x2="-327.7" y2="79.2" stroke-opacity="0.05"/><line x1="1085.0" y1="80.8" x2="1028.7" y2="79.2" stroke-opacity="0.04"/><line x1="-599.5" y1="87.9" x2="-313.9" y2="79.1" stroke-opacity="0.05"/><line x1="1084.9" y1="81.3" x2="1014.8" y2="79.1" stroke-opacity="0.04"/><line x1="-600.0" y1="88.7" x2="-300.3" y2="79.0" stroke-opacity="0.05"/><line x1="1084.8" y1="81.7" x2="1001.3" y2="79.0" stroke-opacity="0.04"/><line x1="-599.6" y1="89.5" x2="-287.1" y2="78.9" stroke-opacity="0.05"/><line x1="1084.8" y1="82.2" x2="988.1" y2="78.9" stroke-opacity="0.04"/><line x1="-599.3" y1="90.4" x2="-274.3" y2="78.9" stroke-opacity="0.05"/><line x1="1085.0" y1="82.8" x2="975.2" y2="78.9" stroke-opacity="0.04"/><line x1="-599.8" y1="91.5" x2="-261.7" y2="78.8" stroke-opacity="0.05"/><line x1="1084.9" y1="83.4" x2="962.6" y2="78.8" stroke-opacity="0.04"/><line x1="-599.4" y1="92.7" x2="-249.4" y2="78.7" stroke-opacity="0.06"/><line x1="1084.8" y1="84.1" x2="950.3" y2="78.7" stroke-opacity="0.05"/><line x1="-599.9" y1="94.0" x2="-237.4" y2="78.6" stroke-opacity="0.06"/><line x1="1085.0" y1="84.9" x2="938.3" y2="78.6" stroke-opacity="0.05"/><line x1="-599.5" y1="95.5" x2="-225.7" y2="78.5" stroke-opacity="0.06"/><line x1="1084.9" y1="85.7" x2="926.6" y2="78.5" stroke-opacity="0.05"/><line x1="-599.0" y1="97.3" x2="-214.2" y2="78.5" stroke-opacity="0.07"/><line x1="1084.8" y1="86.8" x2="915.2" y2="78.5" stroke-opacity="0.05"/><line x1="-599.7" y1="99.3" x2="-203.0" y2="78.4" stroke-opacity="0.07"/><line x1="1084.6" y1="87.9" x2="904.0" y2="78.4" stroke-opacity="0.05"/><line x1="-599.1" y1="101.7" x2="-192.1" y2="78.3" stroke-opacity="0.07"/><line x1="1084.9" y1="89.3" x2="893.0" y2="78.3" stroke-opacity="0.05"/><line x1="-599.9" y1="104.6" x2="-181.4" y2="78.2" stroke-opacity="0.07"/><line x1="1084.8" y1="91.0" x2="882.3" y2="78.2" stroke-opacity="0.05"/><line x1="-599.3" y1="108.0" x2="-170.9" y2="78.2" stroke-opacity="0.07"/><line x1="1084.6" y1="93.0" x2="871.9" y2="78.2" stroke-opacity="0.06"/><line x1="-598.5" y1="112.2" x2="-160.7" y2="78.1" stroke-opacity="0.08"/><line x1="1085.0" y1="95.5" x2="861.6" y2="78.1" stroke-opacity="0.06"/><line x1="-599.5" y1="117.6" x2="-150.6" y2="78.1" stroke-opacity="0.08"/><line x1="1084.8" y1="98.6" x2="851.6" y2="78.1" stroke-opacity="0.07"/><line x1="-598.5" y1="124.6" x2="-140.8" y2="78.0" stroke-opacity="0.09"/><line x1="1084.5" y1="102.7" x2="841.8" y2="78.0" stroke-opacity="0.07"/><line x1="-599.9" y1="134.4" x2="-131.2" y2="77.9" stroke-opacity="0.10"/><line x1="1084.2" y1="108.3" x2="832.1" y2="77.9" stroke-opacity="0.08"/><line x1="-598.5" y1="148.1" x2="-121.8" y2="77.9" stroke-opacity="0.11"/><line x1="1084.8" y1="116.6" x2="822.7" y2="77.9" stroke-opacity="0.08"/><line x1="-596.3" y1="169.7" x2="-112.6" y2="77.8" stroke-opacity="0.12"/><line x1="1084.3" y1="129.3" x2="813.5" y2="77.8" stroke-opacity="0.09"/><line x1="-598.6" y1="209.9" x2="-103.5" y2="77.7" stroke-opacity="0.14"/><line x1="1083.5" y1="152.4" x2="804.5" y2="77.7" stroke-opacity="0.11"/><line x1="-593.5" y1="301.8" x2="-94.7" y2="77.7" stroke-opacity="0.17"/><line x1="1081.4" y1="206.7" x2="795.6" y2="77.7" stroke-opacity="0.14"/><line x1="-599.4" y1="804.7" x2="-86.0" y2="77.6" stroke-opacity="0.17"/><line x1="1081.8" y1="501.0" x2="786.9" y2="77.6" stroke-opacity="0.17"/><line x1="554.9" y1="855.1" x2="-77.5" y2="77.6" stroke-opacity="0.17"/><line x1="138.4" y1="855.1" x2="778.4" y2="77.6" stroke-opacity="0.17"/><line x1="1046.4" y1="555.7" x2="-69.1" y2="77.5" stroke-opacity="0.17"/><line x1="-582.0" y1="654.7" x2="770.1" y2="77.5" stroke-opacity="0.17"/><line x1="1056.1" y1="367.4" x2="-60.9" y2="77.5" stroke-opacity="0.17"/><line x1="-568.3" y1="421.9" x2="761.9" y2="77.5" stroke-opacity="0.17"/><line x1="1082.1" y1="288.7" x2="-52.9" y2="77.4" stroke-opacity="0.17"/><line x1="-592.7" y1="327.6" x2="753.8" y2="77.4" stroke-opacity="0.17"/><line x1="1079.7" y1="240.6" x2="-45.0" y2="77.4" stroke-opacity="0.16"/><line x1="-582.5" y1="269.9" x2="746.0" y2="77.4" stroke-opacity="0.17"/><line x1="1078.2" y1="209.9" x2="-37.3" y2="77.3" stroke-opacity="0.14"/><line x1="-595.7" y1="235.7" x2="738.2" y2="77.3" stroke-opacity="0.16"/><line x1="1077.1" y1="188.7" x2="-29.7" y2="77.3" stroke-opacity="0.14"/><line x1="-588.1" y1="209.9" x2="730.6" y2="77.3" stroke-opacity="0.14"/><line x1="1076.4" y1="173.2" x2="-22.2" y2="77.2" stroke-opacity="0.12"/><line x1="-597.1" y1="192.4" x2="723.2" y2="77.2" stroke-opacity="0.14"/><line x1="1084.9" y1="162.0" x2="-14.9" y2="77.2" stroke-opacity="0.12"/><line x1="-591.1" y1="177.9" x2="715.9" y2="77.2" stroke-opacity="0.13"/><line x1="1083.5" y1="152.4" x2="-7.7" y2="77.1" stroke-opacity="0.11"/><line x1="-597.9" y1="167.2" x2="708.7" y2="77.1" stroke-opacity="0.12"/><line x1="1082.3" y1="144.7" x2="-0.7" y2="77.1" stroke-opacity="0.10"/><line x1="-593.0" y1="157.9" x2="701.6" y2="77.1" stroke-opacity="0.12"/><line x1="1081.4" y1="138.4" x2="6.2" y2="77.0" stroke-opacity="0.10"/><line x1="-598.4" y1="150.8" x2="694.7" y2="77.0" stroke-opacity="0.11"/><line x1="1080.5" y1="133.0" x2="13.0" y2="77.0" stroke-opacity="0.10"/><line x1="-594.3" y1="144.3" x2="687.9" y2="77.0" stroke-opacity="0.10"/><line x1="1079.9" y1="128.5" x2="19.7" y2="76.9" stroke-opacity="0.09"/><line x1="-598.8" y1="139.2" x2="681.2" y2="76.9" stroke-opacity="0.10"/><line x1="1084.7" y1="124.8" x2="26.3" y2="76.9" stroke-opacity="0.09"/><line x1="-595.2" y1="134.4" x2="674.6" y2="76.9" stroke-opacity="0.10"/><line x1="1083.8" y1="121.4" x2="32.8" y2="76.9" stroke-opacity="0.08"/><line x1="-599.1" y1="130.5" x2="668.2" y2="76.9" stroke-opacity="0.10"/><line x1="1083.0" y1="118.4" x2="39.1" y2="76.8" stroke-opacity="0.08"/><line x1="-595.9" y1="126.9" x2="661.8" y2="76.8" stroke-opacity="0.09"/><line x1="1082.4" y1="115.7" x2="45.4" y2="76.8" stroke-opacity="0.08"/><line x1="-599.3" y1="123.9" x2="655.6" y2="76.8" stroke-opacity="0.09"/><line x1="1081.8" y1="113.3" x2="51.5" y2="76.7" stroke-opacity="0.08"/><line x1="-596.4" y1="121.0" x2="649.4" y2="76.7" stroke-opacity="0.08"/><line x1="1081.2" y1="111.2" x2="57.6" y2="76.7" stroke-opacity="0.08"/><line x1="-599.5" y1="118.6" x2="643.4" y2="76.7" stroke-opacity="0.08"/><line x1="1084.6" y1="109.4" x2="63.5" y2="76.7" stroke-opacity="0.08"/><line x1="-596.9" y1="116.2" x2="637.4" y2="76.7" stroke-opacity="0.08"/><line x1="1083.9" y1="107.6" x2="69.4" y2="76.6" stroke-opacity="0.07"/><line x1="-599.6" y1="114.2" x2="631.6" y2="76.6" stroke-opacity="0.08"/><line x1="1083.4" y1="106.0" x2="75.1" y2="76.6" stroke-opacity="0.07"/><line x1="-597.2" y1="112.3" x2="625.9" y2="76.6" stroke-opacity="0.08"/><line x1="1082.9" y1="104.6" x2="80.8" y2="76.6" stroke-opacity="0.07"/><line x1="-599.7" y1="110.7" x2="620.2" y2="76.6" stroke-opacity="0.08"/><line x1="1082.4" y1="103.2" x2="86.3" y2="76.5" stroke-opacity="0.07"/><line x1="-597.5" y1="109.0" x2="614.6" y2="76.5" stroke-opacity="0.08"/><line x1="1081.9" y1="102.0" x2="91.8" y2="76.5" stroke-opacity="0.07"/><line x1="-599.8" y1="107.6" x2="609.1" y2="76.5" stroke-opacity="0.07"/><line x1="1084.5" y1="100.9" x2="97.2" y2="76.4" stroke-opacity="0.07"/><line x1="-597.8" y1="106.2" x2="603.7" y2="76.4" stroke-opacity="0.07"/><line x1="1084.0" y1="99.9" x2="102.5" y2="76.4" stroke-opacity="0.07"/><line x1="-599.9" y1="105.0" x2="598.4" y2="76.4" stroke-opacity="0.07"/><line x1="1083.6" y1="98.9" x2="107.8" y2="76.4" stroke-opacity="0.07"/><line x1="-598.0" y1="103.8" x2="593.2" y2="76.4" stroke-opacity="0.07"/><line x1="1083.1" y1="98.0" x2="112.9" y2="76.3" stroke-opacity="0.07"/><line x1="-600.0" y1="102.8" x2="588.0" y2="76.3" stroke-opacity="0.07"/><line x1="1082.8" y1="97.1" x2="118.0" y2="76.3" stroke-opacity="0.07"/><line x1="-598.2" y1="101.8" x2="583.0" y2="76.3" stroke-opacity="0.07"/><line x1="1084.9" y1="96.4" x2="123.0" y2="76.3" stroke-opacity="0.06"/><line x1="-596.6" y1="100.8" x2="578.0" y2="76.3" stroke-opacity="0.07"/><line x1="1084.5" y1="95.6" x2="127.9" y2="76.2" stroke-opacity="0.06"/><line x1="-598.4" y1="99.9" x2="573.1" y2="76.2" stroke-opacity="0.07"/><line x1="1084.1" y1="94.9" x2="132.8" y2="76.2" stroke-opacity="0.06"/><line x1="-596.8" y1="99.1" x2="568.2" y2="76.2" stroke-opacity="0.07"/><line x1="1083.7" y1="94.2" x2="137.5" y2="76.2" stroke-opacity="0.06"/><line x1="-598.5" y1="98.3" x2="563.4" y2="76.2" stroke-opacity="0.07"/><line x1="1083.3" y1="93.6" x2="142.2" y2="76.2" stroke-opacity="0.06"/><line x1="-597.1" y1="97.6" x2="558.7" y2="76.2" stroke-opacity="0.07"/><line x1="1083.0" y1="93.0" x2="146.9" y2="76.1" stroke-opacity="0.06"/><line x1="-598.7" y1="96.9" x2="554.1" y2="76.1" stroke-opacity="0.07"/><line x1="1084.8" y1="92.5" x2="151.5" y2="76.1" stroke-opacity="0.06"/><line x1="-597.3" y1="96.2" x2="549.5" y2="76.1" stroke-opacity="0.06"/><line x1="1084.4" y1="91.9" x2="156.0" y2="76.1" stroke-opacity="0.06"/><line x1="-598.8" y1="95.6" x2="545.0" y2="76.1" stroke-opacity="0.06"/><line x1="1084.1" y1="91.4" x2="160.4" y2="76.0" stroke-opacity="0.05"/><line x1="-597.5" y1="95.0" x2="540.6" y2="76.0" stroke-opacity="0.06"/><line x1="1083.8" y1="90.9" x2="164.8" y2="76.0" stroke-opacity="0.05"/><line x1="-598.9" y1="94.4" x2="536.2" y2="76.0" stroke-opacity="0.06"/><line x1="1083.5" y1="90.5" x2="169.1" y2="76.0" stroke-opacity="0.05"/><line x1="-597.6" y1="93.9" x2="531.9" y2="76.0" stroke-opacity="0.06"/><line x1="1083.2" y1="90.0" x2="173.4" y2="76.0" stroke-opacity="0.05"/><line x1="-599.0" y1="93.4" x2="527.6" y2="76.0" stroke-opacity="0.06"/><line x1="1084.7" y1="89.6" x2="177.6" y2="75.9" stroke-opacity="0.05"/><line x1="-597.8" y1="92.9" x2="523.4" y2="75.9" stroke-opacity="0.06"/><line x1="1084.4" y1="89.2" x2="181.7" y2="75.9" stroke-opacity="0.05"/><line x1="-599.1" y1="92.4" x2="519.2" y2="75.9" stroke-opacity="0.06"/><line x1="1084.1" y1="88.9" x2="185.8" y2="75.9" stroke-opacity="0.05"/><line x1="-597.9" y1="92.0" x2="515.2" y2="75.9" stroke-opacity="0.06"/><line x1="1083.8" y1="88.5" x2="189.8" y2="75.8" stroke-opacity="0.05"/><line x1="-599.2" y1="91.5" x2="511.1" y2="75.8" stroke-opacity="0.05"/><line x1="1083.6" y1="88.1" x2="193.8" y2="75.8" stroke-opacity="0.05"/><line x1="-598.1" y1="91.1" x2="507.1" y2="75.8" stroke-opacity="0.05"/><line x1="1084.9" y1="87.8" x2="197.7" y2="75.8" stroke-opacity="0.05"/><line x1="-599.3" y1="90.7" x2="503.2" y2="75.8" stroke-opacity="0.05"/><line x1="1084.7" y1="87.5" x2="201.6" y2="75.8" stroke-opacity="0.05"/><line x1="-598.2" y1="90.3" x2="499.3" y2="75.8" stroke-opacity="0.05"/><line x1="1084.4" y1="87.2" x2="205.4" y2="75.7" stroke-opacity="0.05"/><line x1="-599.3" y1="90.0" x2="495.5" y2="75.7" stroke-opacity="0.05"/><line x1="1084.1" y1="86.9" x2="209.2" y2="75.7" stroke-opacity="0.05"/><line x1="-598.3" y1="89.6" x2="491.8" y2="75.7" stroke-opacity="0.05"/><line x1="1083.9" y1="86.6" x2="212.9" y2="75.7" stroke-opacity="0.05"/><line x1="-599.4" y1="89.3" x2="488.0" y2="75.7" stroke-opacity="0.05"/><line x1="1083.7" y1="86.3" x2="216.6" y2="75.7" stroke-opacity="0.05"/><line x1="-598.4" y1="89.0" x2="484.4" y2="75.7" stroke-opacity="0.05"/><line x1="1084.9" y1="86.1" x2="220.2" y2="75.6" stroke-opacity="0.05"/><line x1="-599.4" y1="88.7" x2="480.7" y2="75.6" stroke-opacity="0.05"/><line x1="1084.6" y1="85.8" x2="223.8" y2="75.6" stroke-opacity="0.05"/><line x1="-598.5" y1="88.4" x2="477.1" y2="75.6" stroke-opacity="0.05"/><line x1="1084.4" y1="85.6" x2="227.4" y2="75.6" stroke-opacity="0.05"/><line x1="-599.5" y1="88.1" x2="473.6" y2="75.6" stroke-opacity="0.05"/><line x1="1084.2" y1="85.3" x2="230.9" y2="75.6" stroke-opacity="0.05"/><line x1="-598.6" y1="87.8" x2="470.1" y2="75.6" stroke-opacity="0.05"/><line x1="1083.9" y1="85.1" x2="234.3" y2="75.6" stroke-opacity="0.05"/><line x1="-599.5" y1="87.5" x2="466.7" y2="75.6" stroke-opacity="0.05"/><line x1="1083.7" y1="84.9" x2="237.7" y2="75.5" stroke-opacity="0.05"/><line x1="-598.6" y1="87.3" x2="463.3" y2="75.5" stroke-opacity="0.05"/><line x1="1084.8" y1="84.7" x2="241.1" y2="75.5" stroke-opacity="0.05"/><line x1="-599.6" y1="87.0" x2="459.9" y2="75.5" stroke-opacity="0.05"/><line x1="1084.6" y1="84.5" x2="244.4" y2="75.5" stroke-opacity="0.05"/><line x1="-598.7" y1="86.8" x2="456.6" y2="75.5" stroke-opacity="0.05"/></g></g></svg>
 <svg class="a" style="left:238px;top:187px" width="14" height="10"><path d="M3 8.5 Q0.5 8.5 1 6.5 Q1.5 5 3.2 5.2 Q3.5 2 6.5 2.2 Q9 2.3 9.3 4.5 Q11.8 4.2 12 6.5 Q12 8.5 10 8.5Z" fill="#f2f2f2"/></svg>
 <svg class="a" style="left:325px;top:160px" width="60" height="113"><path d="M25.3 6 L18.8 28 H32Z" fill="#d6b24c"/><path d="M25.3 6 L25.3 28 H32Z" fill="#b09030"/><path d="M25.3 28 V78" stroke="#d8c070" stroke-width="1"/><circle cx="25.5" cy="41" r="4" fill="#fbf6d8" stroke="#777" stroke-width="1.2"/><g stroke="#a8a8a8" stroke-width="1.1"><path d="M25.5 32.5 V35 M25.5 47 V49.5 M17 41 H19.5 M31.5 41 H34 M19.5 35 L21 36.5 M30 45.5 L31.5 47 M19.5 47 L21 45.5 M30 36.5 L31.5 35"/></g>
<path d="M25 77 L40 85 V104 L25 112 L10 104 V85Z" fill="#c8d8e4"/><path d="M10 85 L25 77 L40 85 L25 93Z" fill="#fafafa"/><path d="M10 85 L25 93 V112 L10 104Z" fill="#b4d0ec"/><path d="M25 93 L40 85 V104 L25 112Z" fill="#8e8e8e"/><path d="M10 104 V85 L25 77" fill="none" stroke="#4a72c0" stroke-width="1.3"/><path d="M25 77 L40 85 V104" fill="none" stroke="#e0a030" stroke-width="1.1"/><path d="M25 93 L-10 113" stroke="#e0a030" stroke-width="1.1"/><path d="M25 93 L60 113" stroke="#5a82c8" stroke-width="1"/></svg>
</div>

<!-- Project -->
<div class="tab" style="left:0;top:669px;width:66px;height:18px"></div>
<svg class="a" style="left:2px;top:672px" width="12" height="10"><path d="M0.6 1.6 Q0.6 0.6 1.6 0.6 H4.5 L5.5 1.8 H10.4 Q11.4 1.8 11.4 2.8 V8.4 Q11.4 9.4 10.4 9.4 H1.6 Q0.6 9.4 0.6 8.4Z" fill="#7a7a7a" stroke="#151515" stroke-width="1"/><rect x="1.2" y="3" width="9.6" height="1" fill="#9a9a9a"/></svg>
<span class="t tl" style="left:17px;top:672px">Project</span>
<svg class="a" style="left:78px;top:672px" width="9" height="11"><rect x="0.5" y="0.5" width="8" height="10" fill="#d4dede" stroke="#111" stroke-width="1"/><g fill="#555"><rect x="2" y="2.2" width="5" height="0.9"/><rect x="2" y="4" width="4" height="0.9"/><rect x="2" y="5.8" width="5" height="0.9"/><rect x="2" y="7.6" width="3.5" height="0.9"/></g></svg>
<span class="t tl" style="left:91px;top:672px">Console</span>
<svg class="a" style="left:377px;top:673px" width="28" height="11"><path d="M3.5 4.5 V3 Q3.5 0.8 5.5 0.8 Q7.5 0.8 7.5 3" fill="none" stroke="#8a8a8a" stroke-width="1.1"/><rect x="2" y="4.5" width="7" height="5" fill="#8a8a8a"/><path d="M13 4 h5 l-2.5 2.8z" fill="#c4c4c4"/><rect x="19" y="4" width="8" height="1.1" fill="#c4c4c4"/><rect x="19" y="6.3" width="8" height="1.1" fill="#c4c4c4"/><rect x="19" y="8.6" width="8" height="1.1" fill="#c4c4c4"/></svg>
<div class="tbar" style="left:0;top:686px;width:407px;height:18px"></div>
<div class="a sep" style="left:52px;top:687px"></div>
<div class="a sep" style="left:356px;top:687px"></div>
<div class="a sep" style="left:379px;top:687px"></div>
<div class="a sep" style="left:402px;top:687px"></div>
<span class="t" style="left:7px;top:689px;font-size:10.5px;letter-spacing:0.3px;color:#bdbdbd">Create</span>
<svg class="a" style="left:46px;top:693px" width="6" height="4"><path d="M0 0.5 h5 l-2.5 3z" fill="#aaa"/></svg>
<div class="a" style="left:64px;top:688px;width:289px;height:14px;border-radius:7px;background:#3e3e3e;border:1px solid #242424"></div>
<svg class="a" style="left:68px;top:690px" width="10" height="10"><circle cx="4.2" cy="4" r="2.8" fill="none" stroke="#8f8f8f" stroke-width="1"/><path d="M6 6 L8.5 8.5" stroke="#8f8f8f" stroke-width="1.2"/></svg>
<svg class="a" style="left:362px;top:689px" width="13" height="12"><path d="M1 10 L4.5 3.5 L8 10Z" fill="#b4b4b4"/><circle cx="8.5" cy="4" r="2.5" fill="#b4b4b4"/><rect x="6" y="6.5" width="6" height="4.5" rx="1" fill="#b4b4b4"/></svg>
<svg class="a" style="left:384px;top:688px" width="13" height="13"><path d="M1 1.5 H6.5 L12 7 L7 12 L1 6.5Z" fill="#b4b4b4"/><circle cx="3.8" cy="4.2" r="1.2" fill="#333"/></svg>
<div class="panel" style="left:0;top:704px;width:407px;height:209px"></div>
<svg class="a" style="left:0px;top:713px" width="9" height="8"><path d="M0 0.5 h8 l-4 7z" fill="#707070"/></svg><svg class="a" style="left:11px;top:710px" width="14" height="12"><use href="#folder"/></svg><span class="t hb" style="left:29px;top:711px">Assets</span>
<svg class="a" style="left:14px;top:727px" width="9" height="10"><path d="M0.5 0.5 v9 l7 -4.5z" fill="#707070"/></svg><svg class="a" style="left:25px;top:726px" width="14" height="12"><use href="#folder"/></svg><span class="t hr" style="left:43px;top:727px">Plugins</span>
<svg class="a" style="left:14px;top:745px" width="9" height="8"><path d="M0 0.5 h8 l-4 7z" fill="#707070"/></svg><svg class="a" style="left:25px;top:742px" width="14" height="12"><use href="#folder"/></svg><span class="t hr" style="left:43px;top:743px">Scenes</span>
<svg class="a" style="left:28px;top:761px" width="9" height="8"><path d="M0 0.5 h8 l-4 7z" fill="#707070"/></svg><svg class="a" style="left:39px;top:758px" width="14" height="12"><use href="#folder"/></svg><span class="t hr" style="left:57px;top:759px">Odin-Inspector-Chinese-Tutorial</span>
<svg class="a" style="left:42px;top:775px" width="9" height="10"><path d="M0.5 0.5 v9 l7 -4.5z" fill="#707070"/></svg><svg class="a" style="left:53px;top:774px" width="14" height="12"><use href="#folder"/></svg><span class="t hr" style="left:71px;top:775px">1.QuickStartScenes</span>
<svg class="a" style="left:42px;top:793px" width="9" height="8"><path d="M0 0.5 h8 l-4 7z" fill="#707070"/></svg><svg class="a" style="left:53px;top:790px" width="14" height="12"><use href="#folder"/></svg><span class="t hr" style="left:71px;top:791px">2.AttributeScenes</span>
<svg class="a" style="left:68px;top:806px" width="14" height="13"><use href="#unity"/></svg><span class="t hr" style="left:85px;top:807px">1.Essentials</span>
<svg class="a" style="left:68px;top:822px" width="14" height="13"><use href="#unity"/></svg><span class="t hr" style="left:85px;top:823px">2.TypeSpecifics</span>
<svg class="a" style="left:14px;top:839px" width="9" height="10"><path d="M0.5 0.5 v9 l7 -4.5z" fill="#707070"/></svg><svg class="a" style="left:25px;top:838px" width="14" height="12"><use href="#folder"/></svg><span class="t hr" style="left:43px;top:839px">Scripts</span>
<svg class="a" style="left:14px;top:855px" width="9" height="10"><path d="M0.5 0.5 v9 l7 -4.5z" fill="#707070"/></svg><svg class="a" style="left:25px;top:854px" width="14" height="12"><use href="#folder"/></svg><span class="t hr" style="left:43px;top:855px">TutorialAsset</span>
<svg class="a" style="left:0px;top:871px" width="9" height="10"><path d="M0.5 0.5 v9 l7 -4.5z" fill="#707070"/></svg><svg class="a" style="left:11px;top:870px" width="14" height="12"><use href="#folder"/></svg><span class="t hb" style="left:29px;top:871px">Packages</span>
</body></html>
